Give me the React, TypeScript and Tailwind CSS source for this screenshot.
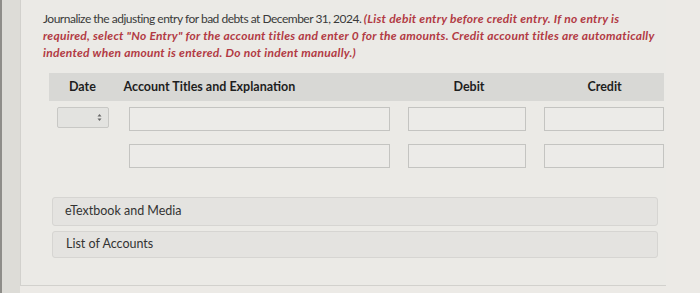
import React from 'react';

const body = { fontFamily: 'Lato, "Liberation Sans", sans-serif' };

function Input() {
  return <div className="h-[24px] border border-[#c4c4c1] bg-[#ecebe8]" />;
}

function DateSelect() {
  return (
    <div className="ml-[8px] flex h-[21px] w-[52px] items-center justify-end rounded-[2px] border border-[#c8c8c5] bg-[#e3e3e0] pr-[6px]">
      <svg width="5" height="9" viewBox="0 0 5 9">
        <path d="M0.5 3.5 L2.5 1 L4.5 3.5 Z" fill="#666" />
        <path d="M0.5 5.5 L2.5 8 L4.5 5.5 Z" fill="#666" />
      </svg>
    </div>
  );
}

function Row({ first }: { first?: boolean }) {
  return (
    <div className={`grid grid-cols-[80px_261px_18px_118px_18px_120px] ${first ? 'mt-[6px]' : 'mt-[13px]'}`}>
      <div>{first && <DateSelect />}</div>
      <Input />
      <div />
      <Input />
      <div />
      <Input />
    </div>
  );
}

export default function App() {
  return (
    <div className="flex h-[293px] w-[700px] overflow-hidden bg-[#eceae6]">
      <div className="flex h-full w-[20px]">
        <div className="w-[2px] bg-[#8e8d89]" />
        <div className="flex-1 bg-[#dddcd7]" />
      </div>
      <div className="h-[286px] w-[646px] border-b border-l border-[#d2d1cd] bg-[#ebeae6] pl-[22px] pt-[10px]">
        <p className="w-[620px] text-[12px] leading-[17px] tracking-[-0.5px] text-[#3a3a3a]" style={body}>
          Journalize the adjusting entry for bad debts at December 31, 2024.{' '}
          <span className="font-bold italic tracking-[0.25px] text-[#b23a44]">
            (List debit entry before credit entry. If no entry is required, select "No Entry" for the account titles
            and enter 0 for the amounts. Credit account titles are automatically indented when amount is entered. Do
            not indent manually.)
          </span>
        </p>

        <div className="ml-[6px] mt-[12px] w-[615px]">
          <div className="flex h-[28px] items-center bg-[#d8d8d5] text-[12.5px] font-bold text-[#1e1e1e]" style={body}>
            <span className="ml-[20px] w-[55px]">Date</span>
            <span className="w-[290px]">Account Titles and Explanation</span>
            <span className="w-[118px] text-center">Debit</span>
            <span className="w-[18px]" />
            <span className="w-[120px] text-center">Credit</span>
          </div>
          <Row first />
          <Row />
        </div>

        <div className="ml-[9px] mt-[29px] flex w-[606px] flex-col gap-[5px] text-[12.5px] text-[#333]" style={body}>
          <div className="flex h-[29px] items-center rounded-[3px] border border-[#d6d5d2] bg-[#e4e3e0] pl-[12px]">
            eTextbook and Media
          </div>
          <div className="flex h-[27px] items-center rounded-[3px] border border-[#d6d5d2] bg-[#e4e3e0] pl-[13px]">
            List of Accounts
          </div>
        </div>
      </div>
    </div>
  );
}
